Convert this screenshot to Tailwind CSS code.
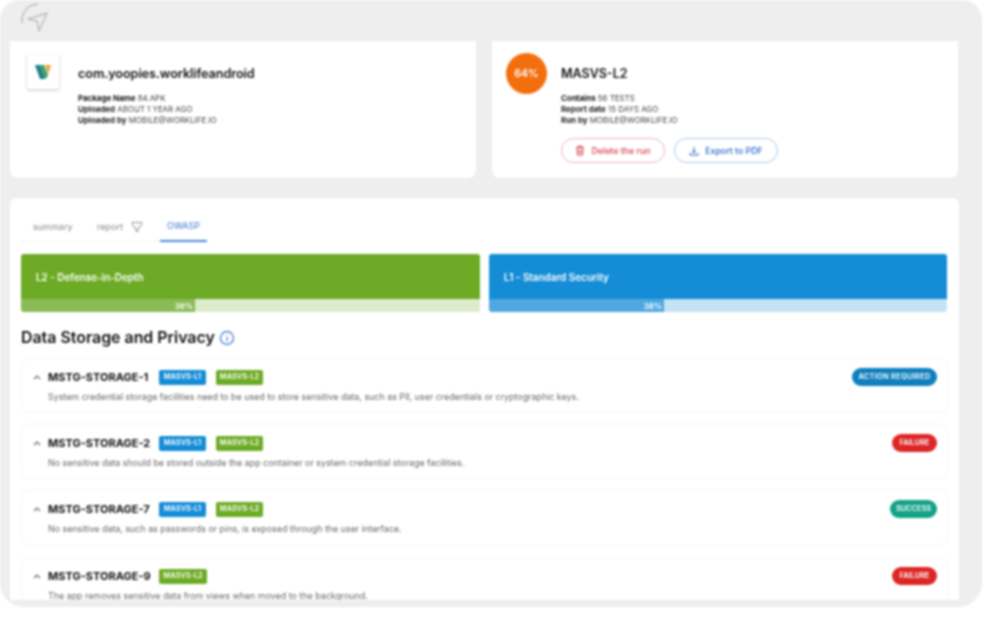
<!DOCTYPE html>
<html><head><meta charset="utf-8"><script src="https://cdn.jsdelivr.net/npm/@tailwindcss/browser@4"></script></head>
<body class="bg-white m-0 overflow-hidden">
<div class="w-[1000px] h-[635px] bg-white font-['Inter','Liberation_Sans',sans-serif] blur-[0.9px]">
<div class="w-[982px] h-[607px] bg-[#eeeeee] rounded-t-[20px] rounded-b-[24px] pl-[10px] pr-[23px] flex flex-col overflow-hidden">
  <div class="h-[41px] shrink-0 pl-[10px] pt-[3px]">
    <svg width="30" height="30" viewBox="0 0 30 30" fill="none" stroke="#bcbcbc" stroke-width="1.4" stroke-linejoin="round"><path d="M2 20C1 10 7 2 18 1"/><path d="M8 16L27 10L19 28L17 18Z"/></svg>
  </div>
  <div class="flex gap-[16px] h-[137px] shrink-0">
    <div class="w-[466px] bg-white rounded-b-[8px] flex gap-[19px] pl-[17px] pt-[14px]">
      <div class="w-[32px] h-[34px] bg-white rounded-[2px] shadow-[0_1px_3px_rgba(0,0,0,0.25)] flex items-center justify-center shrink-0">
        <svg width="18" height="16" viewBox="0 0 18 16"><path d="M1 1H6L11 15H6Z" fill="#1f7f86"/><path d="M6 1H10L14 12L11 15Z" fill="#2fa36b"/><path d="M11 1H17L14 11Z" fill="#f2a13b"/></svg>
      </div>
      <div class="pt-[11px]">
        <div class="text-[12.7px] leading-[16px] font-semibold text-[#111] tracking-[-0.1px]">com.yoopies.worklifeandroid</div>
        <div class="mt-[11px] text-[7.9px] leading-[11px] text-[#444]">
          <div><span class="font-bold text-[#111]">Package Name</span> 84.APK</div>
          <div><span class="font-bold text-[#222]">Uploaded</span> ABOUT 1 YEAR AGO</div>
          <div><span class="font-bold text-[#222]">Uploaded by</span> MOBILE@WORKLIFE.IO</div>
        </div>
      </div>
    </div>
    <div class="w-[466px] bg-white rounded-b-[8px] flex gap-[14px] pl-[14px] pt-[12px]">
      <div class="w-[41px] h-[41px] rounded-full bg-[#f36f0e] text-white text-[10.5px] font-semibold flex items-center justify-center shrink-0">64%</div>
      <div class="pt-[13px]">
        <div class="text-[12.5px] leading-[16px] font-semibold text-[#111]">MASVS-L2</div>
        <div class="mt-[11px] text-[7.9px] leading-[11px] text-[#444]">
          <div><span class="font-bold text-[#111]">Contains</span> 56 TESTS</div>
          <div><span class="font-bold text-[#222]">Report date</span> 15 DAYS AGO</div>
          <div><span class="font-bold text-[#222]">Run by</span> MOBILE@WORKLIFE.IO</div>
        </div>
        <div class="flex gap-[9px] mt-[12px]">
          <div class="w-[104px] h-[25px] rounded-full border border-[#eeb4ba] text-[#d9414f] text-[8.8px] font-medium flex items-center justify-center gap-[6px]">
            <svg width="10" height="11" viewBox="0 0 10 11" fill="none" stroke="#d9414f" stroke-width="1"><path d="M1 2.5H9M3.5 2.5V1H6.5V2.5M2 2.5L2.5 10H7.5L8 2.5M4 4.5V8.5M6 4.5V8.5"/></svg>
            <span>Delete the run</span>
          </div>
          <div class="w-[104px] h-[25px] rounded-full border border-[#a9c6ee] text-[#2467c9] text-[8.8px] font-medium flex items-center justify-center gap-[6px]">
            <svg width="10" height="10" viewBox="0 0 10 10" fill="none" stroke="#2467c9" stroke-width="1"><path d="M5 1V7M3 5L5 7L7 5M1 7V9H9V7"/></svg>
            <span>Export to PDF</span>
          </div>
        </div>
      </div>
    </div>
  </div>
  <div class="h-[20px] shrink-0"></div>
  <div class="h-[402px] shrink-0 bg-white rounded-t-[6px] px-[11px] overflow-hidden">
    <div class="h-[56px] flex items-start">
      <div class="flex h-[44px] w-[186px] border-b border-[#f3f3f3] text-[9px] text-[#888]">
        <div class="pl-[12px] pt-[22px] w-[76px]">summary</div>
        <div class="w-[63px] pt-[22px] flex items-start gap-[8px]"><span>report</span>
          <svg width="12" height="12" viewBox="0 0 12 12" fill="none" stroke="#999" stroke-width="1" class="mt-[1px]"><path d="M1 1.5H11L9 6.5L7 7V10.5H5V7L3 6.5Z"/></svg>
        </div>
        <div class="w-[47px] h-[44px] border-b-[2px] border-[#4f86dc] text-[#3f78d4] text-center pt-[21px]">OWASP</div>
      </div>
    </div>
    <div class="flex gap-[9px]">
      <div class="w-[459px] h-[58px] rounded-[3px] overflow-hidden flex flex-col">
        <div class="h-[45px] bg-[#6dab26] text-white text-[9.9px] font-semibold pl-[15px] pt-[2px] flex items-center">L2 - Defense-in-Depth</div>
        <div class="h-[13px] bg-[#dcebcb] flex"><div class="w-[174px] bg-[#8bbb57] text-white text-[8px] font-semibold flex items-center justify-end pr-[2px]">38%</div></div>
      </div>
      <div class="w-[458px] h-[58px] rounded-[3px] overflow-hidden flex flex-col">
        <div class="h-[45px] bg-[#148dd6] text-white text-[9.9px] font-semibold pl-[15px] pt-[2px] flex items-center">L1 - Standard Security</div>
        <div class="h-[13px] bg-[#c5e2f5] flex"><div class="w-[175px] bg-[#4fa8e0] text-white text-[8px] font-semibold flex items-center justify-end pr-[2px]">38%</div></div>
      </div>
    </div>
    <div class="h-[46px] flex items-center gap-[4px] pt-[5px]">
      <span class="text-[15.9px] font-semibold text-[#111]">Data Storage and Privacy</span>
      <svg width="16" height="16" viewBox="0 0 16 16" fill="none" stroke="#4f86dc" stroke-width="1.4"><circle cx="8" cy="8" r="6.5"/><path d="M8 7V11M8 5V5.6"/></svg>
    </div>
    <div class="flex flex-col gap-[11px]">
      <div class="h-[55px] shrink-0 rounded-[8px] border border-[#f5f5f5] pl-[10px] pr-[10px] flex flex-col">
        <div class="flex items-center h-[36px]">
          <svg width="10" height="6" viewBox="0 0 10 6" fill="none" stroke="#666" stroke-width="1.2" class="mr-[6px] shrink-0"><path d="M2 5L5 2L8 5"/></svg>
          <span class="text-[11px] font-bold text-[#111] w-[111px] whitespace-nowrap">MSTG-STORAGE-1</span>
          <span class="w-[47px] h-[15px] rounded-[2px] bg-[#148dd6] text-white text-[7.4px] font-semibold flex items-center justify-center">MASVS-L1</span>
          <span class="w-[47px] h-[15px] ml-[10px] rounded-[2px] bg-[#6dab26] text-white text-[7.4px] font-semibold flex items-center justify-center">MASVS-L2</span>
          <span class="ml-auto h-[18px] w-[85px] rounded-full bg-[#0f7fbe] text-white text-[7.4px] font-semibold tracking-[0.3px] flex items-center justify-center">ACTION REQUIRED</span>
        </div>
        <div class="pl-[16px] text-[8.9px] leading-[10px] mt-[-3px] text-[#666]">System credential storage facilities need to be used to store sensitive data, such as PII, user credentials or cryptographic keys.</div>
      </div>
      <div class="h-[55px] shrink-0 rounded-[8px] border border-[#f5f5f5] pl-[10px] pr-[10px] flex flex-col">
        <div class="flex items-center h-[36px]">
          <svg width="10" height="6" viewBox="0 0 10 6" fill="none" stroke="#666" stroke-width="1.2" class="mr-[6px] shrink-0"><path d="M2 5L5 2L8 5"/></svg>
          <span class="text-[11px] font-bold text-[#111] w-[111px] whitespace-nowrap">MSTG-STORAGE-2</span>
          <span class="w-[47px] h-[15px] rounded-[2px] bg-[#148dd6] text-white text-[7.4px] font-semibold flex items-center justify-center">MASVS-L1</span>
          <span class="w-[47px] h-[15px] ml-[10px] rounded-[2px] bg-[#6dab26] text-white text-[7.4px] font-semibold flex items-center justify-center">MASVS-L2</span>
          <span class="ml-auto h-[18px] w-[45px] rounded-full bg-[#dc2626] text-white text-[7.4px] font-semibold flex items-center justify-center">FAILURE</span>
        </div>
        <div class="pl-[16px] text-[8.9px] leading-[10px] mt-[-3px] text-[#666]">No sensitive data should be stored outside the app container or system credential storage facilities.</div>
      </div>
      <div class="h-[56px] shrink-0 rounded-[8px] border border-[#f5f5f5] pl-[10px] pr-[10px] flex flex-col">
        <div class="flex items-center h-[36px]">
          <svg width="10" height="6" viewBox="0 0 10 6" fill="none" stroke="#666" stroke-width="1.2" class="mr-[6px] shrink-0"><path d="M2 5L5 2L8 5"/></svg>
          <span class="text-[11px] font-bold text-[#111] w-[111px] whitespace-nowrap">MSTG-STORAGE-7</span>
          <span class="w-[47px] h-[15px] rounded-[2px] bg-[#148dd6] text-white text-[7.4px] font-semibold flex items-center justify-center">MASVS-L1</span>
          <span class="w-[47px] h-[15px] ml-[10px] rounded-[2px] bg-[#6dab26] text-white text-[7.4px] font-semibold flex items-center justify-center">MASVS-L2</span>
          <span class="ml-auto h-[18px] w-[47px] rounded-full bg-[#12a286] text-white text-[7.4px] font-semibold flex items-center justify-center">SUCCESS</span>
        </div>
        <div class="pl-[16px] text-[8.9px] leading-[10px] mt-[-3px] text-[#666]">No sensitive data, such as passwords or pins, is exposed through the user interface.</div>
      </div>
      <div class="h-[55px] shrink-0 rounded-[8px] border border-[#f5f5f5] pl-[10px] pr-[10px] flex flex-col">
        <div class="flex items-center h-[36px]">
          <svg width="10" height="6" viewBox="0 0 10 6" fill="none" stroke="#666" stroke-width="1.2" class="mr-[6px] shrink-0"><path d="M2 5L5 2L8 5"/></svg>
          <span class="text-[11px] font-bold text-[#111] w-[111px] whitespace-nowrap">MSTG-STORAGE-9</span>
          <span class="w-[48px] h-[15px] rounded-[2px] bg-[#6dab26] text-white text-[7.4px] font-semibold flex items-center justify-center">MASVS-L2</span>
          <span class="ml-auto h-[18px] w-[45px] rounded-full bg-[#dc2626] text-white text-[7.4px] font-semibold flex items-center justify-center">FAILURE</span>
        </div>
        <div class="pl-[16px] text-[8.9px] leading-[10px] mt-[-3px] text-[#666]">The app removes sensitive data from views when moved to the background.</div>
      </div>
    </div>
  </div>
</div>
</div>
</body></html>
